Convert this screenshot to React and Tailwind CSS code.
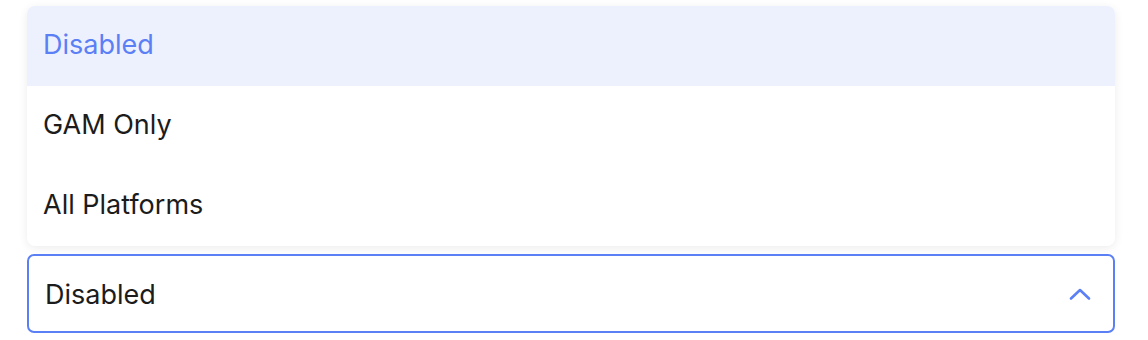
export default function App() {
  const items = ["Disabled", "GAM Only", "All Platforms"];
  return (
    <div className="w-[1148px] h-[340px] bg-white" style={{ fontFamily: "Inter, 'Noto Sans', sans-serif" }}>
      <div className="pt-[6px] pl-[27px] w-[1115px]">
        <div className="w-[1088px] rounded-[8px] bg-white shadow-[0_2px_10px_rgba(0,0,0,0.08)] overflow-hidden">
          {items.map((t, i) => (
            <div
              key={t}
              className={
                "h-[80px] flex items-center pl-[16px] pb-[2px] text-[27px] " +
                (i === 0 ? "bg-[#edf1fe] text-[#5b7ff5]" : "text-[#1c1c1c]")
              }
            >
              {t}
            </div>
          ))}
        </div>
        <div className="mt-[8px] w-[1088px] h-[79px] rounded-[7px] border-2 border-[#5b7ff5] flex items-center justify-between pl-[16px] pr-[22px] text-[27px] text-[#1c1c1c]">
          <span className="pt-[4px]">Disabled</span>
          <svg width="22" height="14" viewBox="0 0 22 14" fill="none">
            <path d="M2 11.5 L11 3 L20 11.5" stroke="#5b7ff5" strokeWidth="2.6" strokeLinecap="round" strokeLinejoin="round" />
          </svg>
        </div>
      </div>
    </div>
  );
}
